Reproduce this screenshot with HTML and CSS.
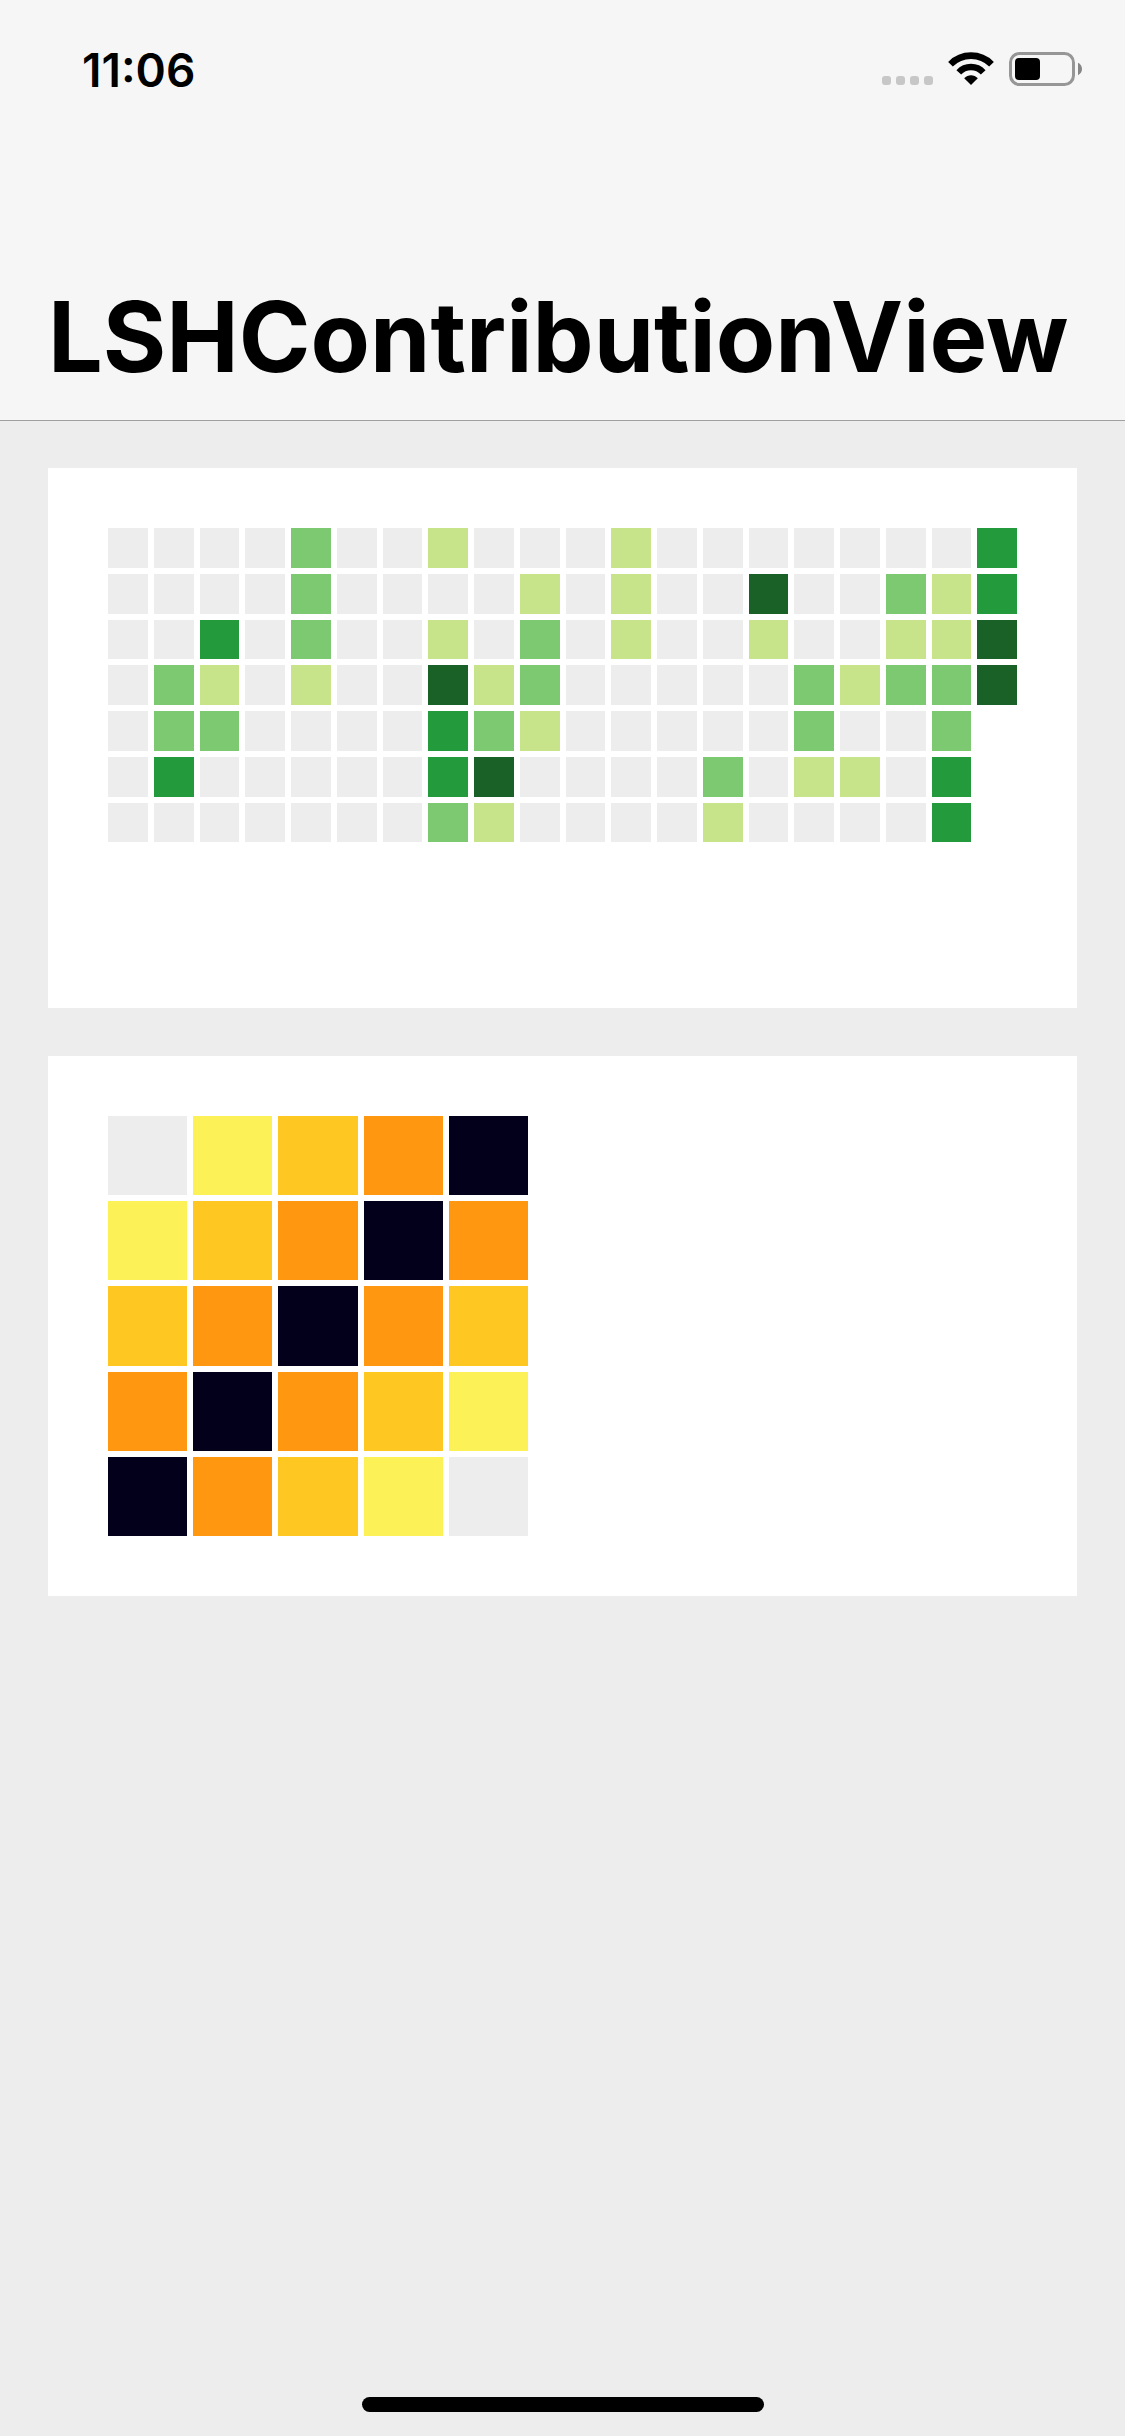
FILE: index.html
```html
<!DOCTYPE html>
<html lang="en">
<head>
  <meta charset="utf-8">
  <meta name="viewport" content="width=device-width, initial-scale=1">
  <title>LSHContributionView</title>
  <link rel="stylesheet" href="styles.css">
</head>
<body>
  <header class="navbar">
    <div class="status">
      <time class="status-time">11:06</time>
      <div class="status-icons">
        <svg class="icon-signal" width="51" height="10" viewBox="0 0 51 10" aria-hidden="true">
          <rect width="9" height="9" rx="3"/>
          <rect x="14" width="9" height="9" rx="3"/>
          <rect x="28" width="9" height="9" rx="3"/>
          <rect x="42" width="9" height="9" rx="3"/>
        </svg>
        <svg width="46" height="34" viewBox="0 0 46 34" aria-hidden="true">
          <path d="M2.5 12.2A28.8 28.8 0 0 1 43.5 12.2" fill="none" stroke="#000" stroke-width="6.6"/>
          <path d="M10.8 20.3A16.6 16.6 0 0 1 35.2 20.3" fill="none" stroke="#000" stroke-width="6.4"/>
          <path d="M16.2 26.2C20 22.2 26 22.2 29.8 26.2L23 33Z"/>
        </svg>
        <svg width="73" height="34" viewBox="0 0 73 34" aria-hidden="true">
          <rect x="1.5" y="1.5" width="63" height="31" rx="9" fill="none" stroke="#969696" stroke-width="3"/>
          <rect x="6" y="6" width="25" height="22" rx="4"/>
          <path d="M69 10.8C71.4 12 73 14.200 73 17S71.400 22 69 23.200Z" fill="#868686"/>
        </svg>
      </div>
    </div>
    <h1 class="title">LSHContributionView</h1>
  </header>

  <main class="content">
    <section class="card" aria-label="Twenty weeks of contributions">
      <div class="chart chart-weeks" data-levels="0000000 0002230 0031200 0000000 2221000 0000000 0000000 1014332 0001241 0122100 0000000 1110000 0000000 0000021 0410000 0002210 0001010 0212000 0112233 3344"></div>
    </section>
    <section class="card" aria-label="Five by five contributions">
      <div class="chart chart-square" data-levels="01234 12343 23432 34321 43210"></div>
    </section>
  </main>

  <footer class="home"><div class="home-bar"></div></footer>
  <script src="chart.js"></script>
</body>
</html>
```

FILE: styles.css
```css
* {
  box-sizing: border-box;
}

body {
  margin: 0;
  min-height: 100vh;
  display: flex;
  flex-direction: column;
  background: #ededed;
  color: #000;
  font-family: Inter, "Liberation Sans", sans-serif;
}

.navbar {
  height: 420px;
  display: flex;
  flex-direction: column;
  justify-content: space-between;
  padding-bottom: 23px;
  background: #f6f6f6;
  box-shadow: 0 1px 0 #a0a0a0;
}

.status {
  display: flex;
  justify-content: space-between;
  align-items: flex-end;
  padding: 40px 43px 0 82px;
}

.status-time {
  font-size: 46px;
  font-weight: 600;
  line-height: 60px;
}

.status-icons {
  display: flex;
  align-items: flex-end;
  gap: 15px;
  padding-bottom: 14px;
}

.icon-signal {
  fill: #c7c7c7;
}

.title {
  margin: 0;
  padding: 0 48px;
  font-size: 97px;
  font-weight: 700;
  line-height: 120px;
  white-space: nowrap;
}

.content {
  flex: 1;
  display: flex;
  flex-direction: column;
  gap: 48px;
  padding: 48px;
}

.card {
  height: 540px;
  padding: 60px;
  background: #fff;
}

.chart {
  display: grid;
  grid-auto-flow: column;
  gap: 6px;
}

.chart-weeks {
  grid-template-rows: repeat(7, auto);
  grid-auto-columns: 1fr;
}

.chart-square {
  grid-template-rows: repeat(5, 1fr);
  grid-auto-columns: 1fr;
  height: 100%;
  aspect-ratio: 1;
}

.chart-weeks .cell {
  aspect-ratio: 1;
}

.cell {
  background: #ededed;
}

.chart-weeks .level-1 { background: #c7e48b; }
.chart-weeks .level-2 { background: #7cc971; }
.chart-weeks .level-3 { background: #239a3b; }
.chart-weeks .level-4 { background: #1a6127; }

.chart-square .level-1 { background: #fcf157; }
.chart-square .level-2 { background: #ffc722; }
.chart-square .level-3 { background: #ff9711; }
.chart-square .level-4 { background: #03001c; }

.home {
  display: flex;
  justify-content: center;
  padding-bottom: 24px;
}

.home-bar {
  width: 402px;
  height: 15px;
  border-radius: 8px;
  background: #000;
}
```

FILE: chart.js
```js
// Each word in data-levels is one column, each digit one cell's level.
document.querySelectorAll(".chart").forEach((chart) => {
  for (const level of chart.dataset.levels.replace(/\s/g, "")) {
    const cell = document.createElement("div");
    cell.className = `cell level-${level}`;
    chart.append(cell);
  }
});
```
